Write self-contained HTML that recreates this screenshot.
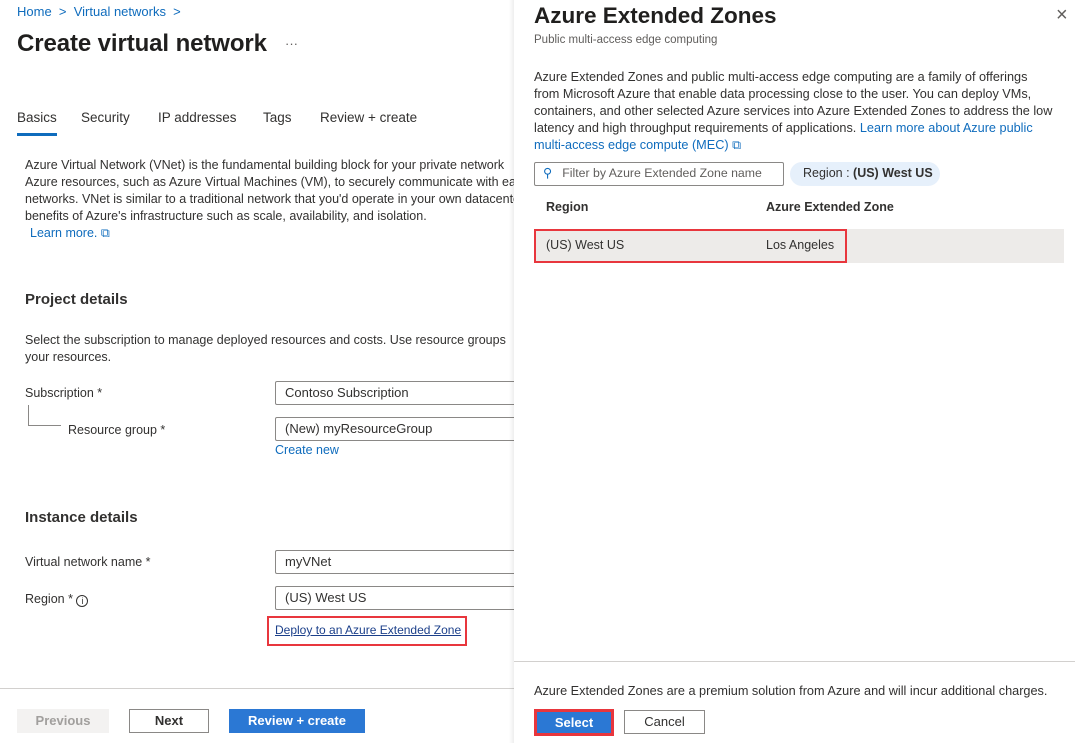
<!DOCTYPE html>
<html><head><meta charset="utf-8"><style>
*{margin:0;padding:0;box-sizing:border-box}
body{width:1075px;height:743px;overflow:hidden;background:#fff;font-family:"Liberation Sans",Arial,sans-serif;color:#323130;font-size:13px;position:relative}
.a{position:absolute;white-space:nowrap}
.link{color:#0f6cbd}
.inp{position:absolute;border:1px solid #8a8886;height:24px;border-radius:2px;padding:3px 9px;font-size:13px;background:#fff}
.btn{position:absolute;height:24px;font-size:13px;text-align:center;line-height:22px;font-weight:bold}
</style></head><body>
<div class="a link" style="left:17px;top:4px;font-size:13px">Home &nbsp;&gt;&nbsp; Virtual networks &nbsp;&gt;</div>
<div class="a" style="left:17px;top:30px;font-size:24px;font-weight:bold;color:#201f1e;letter-spacing:-0.1px">Create virtual network</div>
<div class="a" style="left:285px;top:36px;color:#605e5c">···</div>
<div class="a" style="left:17px;top:110px;font-size:13.5px">Basics</div>
<div class="a" style="left:17px;top:133px;width:40px;height:3px;background:#0f6cbd"></div>
<div class="a" style="left:81px;top:110px;font-size:13.5px">Security</div>
<div class="a" style="left:158px;top:110px;font-size:13.5px">IP addresses</div>
<div class="a" style="left:263px;top:110px;font-size:13.5px">Tags</div>
<div class="a" style="left:320px;top:110px;font-size:13.5px">Review + create</div>
<div class="a" style="left:25px;top:157px;line-height:17px;font-size:12.5px">Azure Virtual Network (VNet) is the fundamental building block for your private network<br>Azure resources, such as Azure Virtual Machines (VM), to securely communicate with each<br>networks. VNet is similar to a traditional network that you'd operate in your own datacenter<br>benefits of Azure's infrastructure such as scale, availability, and isolation.</div>
<div class="a link" style="left:30px;top:226px;font-size:12.5px">Learn more. ⧉</div>
<div class="a" style="left:25px;top:291px;font-size:15px;font-weight:bold">Project details</div>
<div class="a" style="left:25px;top:332px;line-height:17px;font-size:12.5px">Select the subscription to manage deployed resources and costs. Use resource groups<br>your resources.</div>
<div class="a" style="left:25px;top:386px;font-size:12.5px">Subscription *</div>
<div class="a" style="left:28px;top:405px;width:33px;height:21px;border-left:1px solid #8a8886;border-bottom:1px solid #8a8886"></div>
<div class="a" style="left:68px;top:423px;font-size:12.5px">Resource group *</div>
<div class="inp" style="left:275px;top:381px;width:260px">Contoso Subscription</div>
<div class="inp" style="left:275px;top:417px;width:260px">(New) myResourceGroup</div>
<div class="a link" style="left:275px;top:443px;font-size:12.5px">Create new</div>
<div class="a" style="left:25px;top:509px;font-size:15px;font-weight:bold">Instance details</div>
<div class="a" style="left:25px;top:555px;font-size:12.5px">Virtual network name *</div>
<div class="a" style="left:25px;top:592px;font-size:12.5px">Region * <span style="display:inline-block;width:12px;height:12px;border:1px solid #323130;border-radius:50%;font-size:9px;text-align:center;line-height:10px;vertical-align:-1px">i</span></div>
<div class="inp" style="left:275px;top:550px;width:260px">myVNet</div>
<div class="inp" style="left:275px;top:586px;width:260px">(US) West US</div>
<div class="a" style="left:267px;top:616px;width:200px;height:30px;border:2px solid #e8363d"></div>
<div class="a" style="left:275px;top:623px;font-size:12px;color:#1b3f8a;text-decoration:underline">Deploy to an Azure Extended Zone</div>
<div class="a" style="left:0;top:688px;width:520px;height:1px;background:#d2d0ce"></div>
<div class="btn" style="left:17px;top:709px;width:92px;background:#f3f2f1;color:#a19f9d;border:1px solid #f3f2f1">Previous</div>
<div class="btn" style="left:129px;top:709px;width:80px;border:1px solid #8a8886;color:#323130">Next</div>
<div class="btn" style="left:229px;top:709px;width:136px;background:#2b78d4;color:#fff;border:1px solid #2b78d4">Review + create</div>

<div class="a" style="left:509px;top:0;width:6px;height:743px;background:linear-gradient(to right,rgba(0,0,0,0),rgba(0,0,0,0.08))"></div>
<div class="a" style="left:514px;top:0;width:561px;height:743px;background:#fff"></div>
<div class="a" style="left:534px;top:3px;font-size:22.5px;font-weight:bold;color:#201f1e">Azure Extended Zones</div>
<div class="a" style="left:1056px;top:4px;font-size:20px;color:#605e5c">×</div>
<div class="a" style="left:534px;top:34px;font-size:11.5px;color:#605e5c">Public multi-access edge computing</div>
<div class="a" style="left:534px;top:69px;line-height:17px;font-size:12.7px">Azure Extended Zones and public multi-access edge computing are a family of offerings<br>from Microsoft Azure that enable data processing close to the user. You can deploy VMs,<br>containers, and other selected Azure services into Azure Extended Zones to address the low<br>latency and high throughput requirements of applications. <span class="link">Learn more about Azure public</span><br><span class="link">multi-access edge compute (MEC) ⧉</span></div>
<div class="inp" style="left:534px;top:162px;width:250px;height:24px;padding:3px 8px;font-size:12.3px;color:#605e5c"><span style="color:#0f6cbd">⚲</span>&nbsp;&nbsp; Filter by Azure Extended Zone name</div>
<div class="a" style="left:790px;top:162px;width:150px;height:24px;border-radius:12px;background:#e6f0fb;padding:4px 13px;font-size:12.5px">Region : <b>(US) West US</b></div>
<div class="a" style="left:546px;top:200px;font-size:12.5px;font-weight:bold">Region</div>
<div class="a" style="left:766px;top:200px;font-size:12.5px;font-weight:bold">Azure Extended Zone</div>
<div class="a" style="left:534px;top:229px;width:530px;height:34px;background:#edebe9"></div>
<div class="a" style="left:534px;top:229px;width:313px;height:34px;border:2px solid #e8363d"></div>
<div class="a" style="left:546px;top:238px;font-size:12.5px">(US) West US</div>
<div class="a" style="left:766px;top:238px;font-size:12.5px">Los Angeles</div>
<div class="a" style="left:514px;top:661px;width:561px;height:1px;background:#d2d0ce"></div>
<div class="a" style="left:534px;top:684px;font-size:12.7px">Azure Extended Zones are a premium solution from Azure and will incur additional charges.</div>
<div class="btn" style="left:534px;top:709px;width:80px;height:27px;background:#2b78d4;color:#fff;border:3px solid #e8363d;line-height:21px">Select</div>
<div class="btn" style="left:624px;top:710px;width:81px;border:1px solid #8a8886;color:#323130;font-weight:normal">Cancel</div>
</body></html>
